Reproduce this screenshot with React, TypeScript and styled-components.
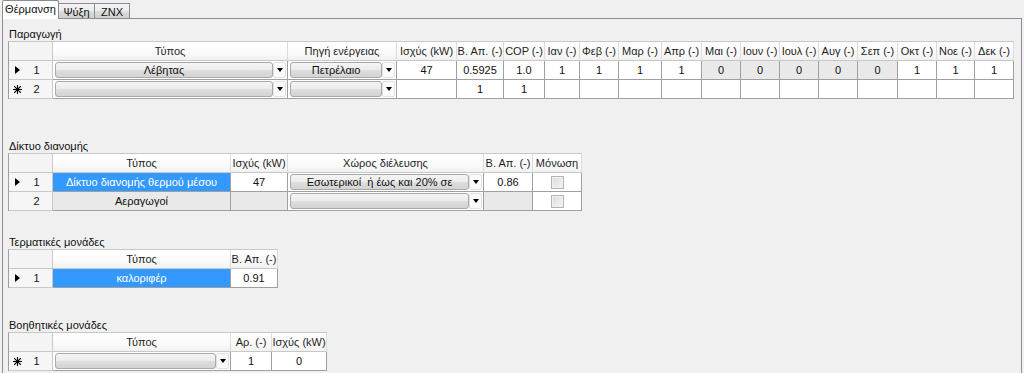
import React from 'react';
import styled, { createGlobalStyle, css } from 'styled-components';

const GlobalStyle = createGlobalStyle`
  html, body { margin: 0; padding: 0; background: #f0f0f0; }
  body {
    font-family: "Liberation Sans", Arial, sans-serif;
    font-size: 11px;
    color: #111;
  }
`;

const Window = styled.div`
  width: 1024px;
  height: 373px;
  overflow: hidden;
  background: #f0f0f0;
`;

const TabStrip = styled.div`
  display: flex;
  align-items: flex-end;
  height: 19px;
  padding-left: 2px;
  position: relative;
  z-index: 1;
`;

const Tab = styled.div<{ $active?: boolean; $w: number }>`
  box-sizing: border-box;
  width: ${p => p.$w}px;
  display: flex;
  align-items: center;
  justify-content: center;
  border: 1px solid #898c95;
  border-bottom: none;
  margin-left: -1px;
  &:first-child { margin-left: 0; }
  ${p =>
    p.$active
      ? css`
          height: 19px;
          padding-bottom: 2px;
          background: #ffffff;
          position: relative;
          z-index: 2;
          border-radius: 2px 2px 0 0;
        `
      : css`
          height: 16px;
          background: linear-gradient(#f3f3f3, #ebebeb 50%, #dddddd 50%, #cfcfcf);
          border-bottom: 1px solid #898c95;
          padding-top: 1px;
        `}
`;

const Panel = styled.div`
  box-sizing: border-box;
  margin: -1px 0 0 2px;
  width: 1020px;
  height: 360px;
  border: 1px solid #898c95;
  background: #f0f0f0;
  padding: 8px 0 0 5px;
  display: flex;
  flex-direction: column;
`;

const Section = styled.section<{ $gap: number }>`
  margin-top: ${p => p.$gap}px;
  display: flex;
  flex-direction: column;
  align-items: flex-start;
`;

const SectionLabel = styled.div`
  height: 14px;
  line-height: 14px;
  padding-left: 1px;
`;

const GridFrame = styled.div<{ $cols: string }>`
  display: grid;
  grid-template-columns: ${p => p.$cols};
  grid-auto-rows: 19px;
  border-left: 1px solid #a0a0a0;
  border-top: 1px solid #c8c8c8;
  background: #ffffff;
`;

const cellBase = css`
  box-sizing: border-box;
  border-right: 1px solid #a0a0a0;
  border-bottom: 1px solid #a0a0a0;
  display: flex;
  align-items: center;
  justify-content: center;
  white-space: pre;
  overflow: hidden;
`;

const CornerCell = styled.div`
  ${cellBase};
  background: #f4f4f4;
  border-right-color: #c8c8c8;
  border-bottom-color: #c8c8c8;
`;

const HeaderCell = styled.div`
  ${cellBase};
  background: linear-gradient(#ffffff, #fafafa 60%, #f1f1f1);
  border-right-color: #dcdcdc;
  border-bottom-color: #c8c8c8;
  color: #1e1e1e;
`;

const RowHeaderCell = styled.div`
  ${cellBase};
  justify-content: flex-start;
  background: #f6f6f6;
  border-right-color: #c8c8c8;
  border-bottom-color: #c8c8c8;
  padding-left: 4px;
`;

const MarkerSlot = styled.span`
  width: 10px;
  height: 10px;
  display: flex;
  align-items: center;
  justify-content: flex-start;
`;

const CurrentMarker = styled.span`
  width: 0;
  height: 0;
  border-top: 4px solid transparent;
  border-bottom: 4px solid transparent;
  border-left: 5px solid #000;
  margin-left: 2px;
`;

const RowNumber = styled.span`
  flex: 1;
  text-align: center;
  padding-right: 2px;
`;

type Tone = 'white' | 'gray' | 'selected';

const TextCell = styled.div<{ $tone: Tone }>`
  ${cellBase};
  ${p =>
    p.$tone === 'selected'
      ? css`
          background: #3399ff;
          color: #ffffff;
        `
      : p.$tone === 'gray'
      ? css`
          background: #e9e9e9;
        `
      : css`
          background: #ffffff;
        `}
`;

const ComboCell = styled.div`
  ${cellBase};
  background: #ffffff;
  padding: 1px 1px 1px 2px;
  align-items: stretch;
`;

const ComboBody = styled.div`
  flex: 1;
  box-sizing: border-box;
  border: 1px solid #a9a9a9;
  border-radius: 3px;
  background: linear-gradient(#f4f4f4, #ececec 50%, #dfdfdf 50%, #d3d3d3);
  display: flex;
  align-items: center;
  justify-content: center;
  padding-bottom: 1px;
`;

const ComboArrow = styled.div`
  width: 13px;
  box-sizing: border-box;
  display: flex;
  align-items: center;
  justify-content: center;
  background: #fafafa;
  border: 1px solid #e2e2e2;
  border-radius: 2px;
`;

const ArrowGlyph = styled.span`
  width: 0;
  height: 0;
  border-left: 3.5px solid transparent;
  border-right: 3.5px solid transparent;
  border-top: 4px solid #000;
`;

const CheckCell = styled.div`
  ${cellBase};
  background: #ffffff;
`;

const CheckBox = styled.span`
  box-sizing: border-box;
  width: 13px;
  height: 13px;
  border: 1px solid #b4b4b4;
  background: linear-gradient(135deg, #dcdcdc, #f4f4f4);
  box-shadow: inset 0 0 0 1px #f0f0f0;
`;

const NewRowIcon = () => (
  <svg width="9" height="9" viewBox="0 0 9 9">
    <g stroke="#000" strokeWidth="1.1" strokeLinecap="square">
      <line x1="4.5" y1="0.5" x2="4.5" y2="8.5" />
      <line x1="0.5" y1="4.5" x2="8.5" y2="4.5" />
      <line x1="1.6" y1="1.6" x2="7.4" y2="7.4" />
      <line x1="7.4" y1="1.6" x2="1.6" y2="7.4" />
    </g>
  </svg>
);

type CellDef =
  | { kind: 'text'; value: string; tone?: Tone }
  | { kind: 'combo'; value: string }
  | { kind: 'check' };

type RowDef = { marker?: 'current' | 'new'; label: string; cells: CellDef[] };

type GridDef = { widths: number[]; headers: string[]; rows: RowDef[] };

const t = (value: string, tone: Tone = 'white'): CellDef => ({ kind: 'text', value, tone });
const combo = (value: string): CellDef => ({ kind: 'combo', value });
const check: CellDef = { kind: 'check' };

const Cell = ({ def }: { def: CellDef }) => {
  if (def.kind === 'combo')
    return (
      <ComboCell>
        <ComboBody>{def.value}</ComboBody>
        <ComboArrow>
          <ArrowGlyph />
        </ComboArrow>
      </ComboCell>
    );
  if (def.kind === 'check')
    return (
      <CheckCell>
        <CheckBox />
      </CheckCell>
    );
  return <TextCell $tone={def.tone ?? 'white'}>{def.value}</TextCell>;
};

const DataGrid = ({ grid }: { grid: GridDef }) => (
  <GridFrame $cols={grid.widths.map(w => `${w}px`).join(' ')}>
    <CornerCell />
    {grid.headers.map(h => (
      <HeaderCell key={h}>{h}</HeaderCell>
    ))}
    {grid.rows.map((r, ri) => (
      <React.Fragment key={ri}>
        <RowHeaderCell>
          <MarkerSlot>
            {r.marker === 'current' && <CurrentMarker />}
            {r.marker === 'new' && <NewRowIcon />}
          </MarkerSlot>
          <RowNumber>{r.label}</RowNumber>
        </RowHeaderCell>
        {r.cells.map((c, ci) => (
          <Cell key={ci} def={c} />
        ))}
      </React.Fragment>
    ))}
  </GridFrame>
);

const months = ['Ιαν', 'Φεβ', 'Μαρ', 'Απρ', 'Μαι', 'Ιουν', 'Ιουλ', 'Αυγ', 'Σεπ', 'Οκτ', 'Νοε', 'Δεκ'];
const monthValues = ['1', '1', '1', '1', '0', '0', '0', '0', '0', '1', '1', '1'];

const production: GridDef = {
  widths: [44, 235, 109, 60, 47, 41, 35, 39, 43, 40, 39, 39, 39, 39, 40, 39, 38, 39],
  headers: ['Τύπος', 'Πηγή ενέργειας', 'Ισχύς (kW)', 'Β. Απ. (-)', 'COP (-)', ...months.map(m => `${m} (-)`)],
  rows: [
    {
      marker: 'current',
      label: '1',
      cells: [
        combo('Λέβητας'),
        combo('Πετρέλαιο'),
        t('47'),
        t('0.5925'),
        t('1.0'),
        ...monthValues.map(v => t(v, v === '0' ? 'gray' : 'white')),
      ],
    },
    {
      marker: 'new',
      label: '2',
      cells: [combo(''), combo(''), t(''), t('1'), t('1'), ...months.map(() => t(''))],
    },
  ],
};

const distribution: GridDef = {
  widths: [44, 178, 57, 196, 49, 49],
  headers: ['Τύπος', 'Ισχύς (kW)', 'Χώρος διέλευσης', 'Β. Απ. (-)', 'Μόνωση'],
  rows: [
    {
      marker: 'current',
      label: '1',
      cells: [
        t('Δίκτυο διανομής θερμού μέσου', 'selected'),
        t('47'),
        combo('Εσωτερικοί  ή έως και 20% σε'),
        t('0.86'),
        check,
      ],
    },
    {
      label: '2',
      cells: [t('Αεραγωγοί', 'gray'), t('', 'gray'), combo(''), t('', 'gray'), check],
    },
  ],
};

const terminal: GridDef = {
  widths: [44, 178, 47],
  headers: ['Τύπος', 'Β. Απ. (-)'],
  rows: [{ marker: 'current', label: '1', cells: [t('καλοριφέρ', 'selected'), t('0.91')] }],
};

const auxiliary: GridDef = {
  widths: [44, 178, 41, 55],
  headers: ['Τύπος', 'Αρ. (-)', 'Ισχύς (kW)'],
  rows: [{ marker: 'new', label: '1', cells: [combo(''), t('1'), t('0')] }],
};

const sections: { title: string; gap: number; grid: GridDef }[] = [
  { title: 'Παραγωγή', gap: 0, grid: production },
  { title: 'Δίκτυο διανομής', gap: 40, grid: distribution },
  { title: 'Τερματικές μονάδες', gap: 24, grid: terminal },
  { title: 'Βοηθητικές μονάδες', gap: 30, grid: auxiliary },
];

export default function App() {
  return (
    <>
      <GlobalStyle />
      <Window>
        <TabStrip>
          <Tab $active $w={57}>Θέρμανση</Tab>
          <Tab $w={37}>Ψύξη</Tab>
          <Tab $w={36}>ZNX</Tab>
        </TabStrip>
        <Panel>
          {sections.map(s => (
            <Section key={s.title} $gap={s.gap}>
              <SectionLabel>{s.title}</SectionLabel>
              <DataGrid grid={s.grid} />
            </Section>
          ))}
        </Panel>
      </Window>
    </>
  );
}
